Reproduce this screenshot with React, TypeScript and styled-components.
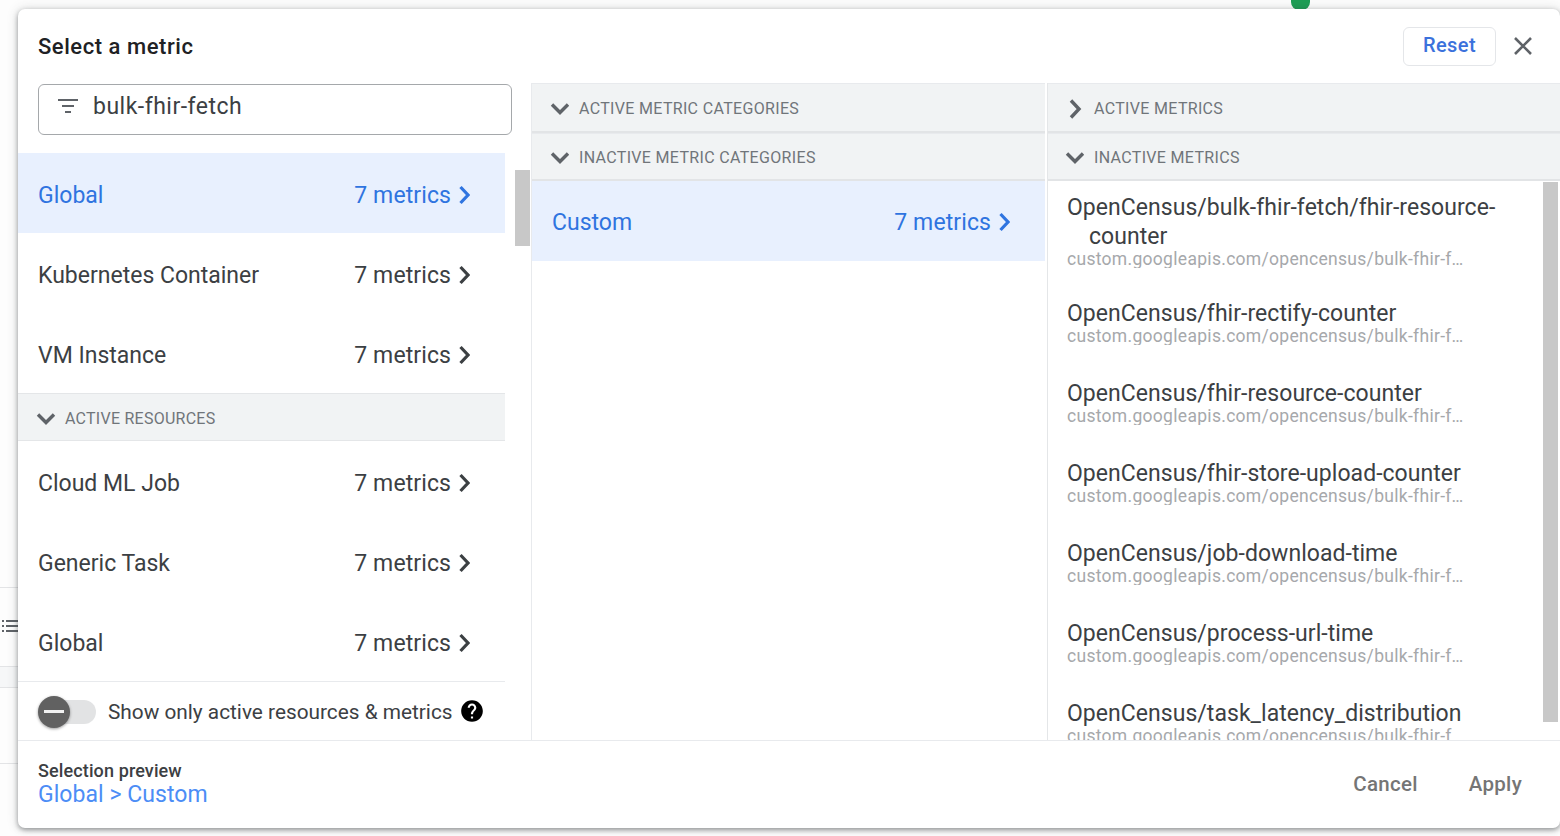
import React from "react";
import styled, { createGlobalStyle } from "styled-components";

const Global = createGlobalStyle`
  html, body { margin: 0; padding: 0; background: #fff; }
  body { font-family: Roboto, "Liberation Sans", sans-serif; color: #3c4043; -webkit-font-smoothing: antialiased; }
`;

const Page = styled.div`
  position: relative;
  width: 1560px;
  height: 836px;
  overflow: hidden;
  background: #fdfdfd;
`;
const TopDot = styled.div`
  position: absolute;
  left: 1291px;
  top: -10px;
  width: 19px;
  height: 20px;
  border-radius: 8px;
  background: #1e9e55;
`;
const BackdropList = styled.div`
  position: absolute;
  left: 2px;
  top: 619px;
  color: #5f6368;
  line-height: 0;
`;
const BackdropLine = styled.div<{ $top: number }>`
  position: absolute;
  left: 0;
  top: ${(p) => p.$top}px;
  width: 18px;
  height: 1px;
  background: #e3e4e6;
`;
const BackdropBand = styled.div`
  position: absolute;
  left: 0;
  top: 667px;
  width: 18px;
  height: 20px;
  background: #f6f7f8;
`;
const Dialog = styled.div`
  position: absolute;
  left: 18px;
  top: 9px;
  width: 1542px;
  height: 819px;
  display: flex;
  flex-direction: column;
  background: #fff;
  border-radius: 7px;
  box-shadow: 0 2px 5px rgba(60, 64, 67, 0.5), 0 0 12px rgba(60, 64, 67, 0.18);
  overflow: hidden;
`;
const Header = styled.header`
  height: 74px;
  flex: none;
  display: flex;
  align-items: center;
  padding: 0 25px 0 20px;
`;
const Title = styled.h1`
  flex: 1;
  margin: 0;
  font-size: 22px;
  font-weight: 500;
  letter-spacing: 0.55px;
  color: #202124;
`;
const ResetButton = styled.button`
  width: 93px;
  height: 39px;
  border: 1px solid #e4e6e9;
  border-radius: 6px;
  background: #fff;
  color: #3b71dc;
  font: 500 20px Roboto, sans-serif;
  letter-spacing: 0.4px;
  padding: 0 0 2px;
`;
const CloseButton = styled.button`
  width: 24px;
  height: 24px;
  margin-left: 15px;
  padding: 0;
  border: 0;
  background: none;
  color: #5f6368;
  line-height: 0;
`;
const Body = styled.div`
  flex: 1;
  min-height: 0;
  display: flex;
`;
const LeftColumn = styled.section`
  position: relative;
  width: 514px;
  flex: none;
  box-sizing: border-box;
  display: flex;
  flex-direction: column;
  border-right: 1px solid #e8eaed;
`;
const SearchBox = styled.div`
  width: 474px;
  height: 51px;
  flex: none;
  box-sizing: border-box;
  margin: 1px 0 18px 20px;
  padding: 0 0 7px 19px;
  display: flex;
  align-items: center;
  gap: 15px;
  border: 1px solid #a5a8ab;
  border-radius: 6px;
  color: #5f6368;
`;
const SearchText = styled.span`
  font-size: 23px;
  letter-spacing: 0.5px;
  color: #3c4043;
`;
const ResourceList = styled.div`
  width: 487px;
  flex: 1;
  min-height: 0;
`;
const Row = styled.div<{ $selected?: boolean; $pad: number; $top: number }>`
  height: 80px;
  flex: none;
  box-sizing: border-box;
  display: flex;
  align-items: center;
  justify-content: space-between;
  padding: ${(p) => p.$top}px ${(p) => p.$pad}px 0 20px;
  font-size: 23px;
  letter-spacing: 0;
  background: ${(p) => (p.$selected ? "#e8f0fe" : "transparent")};
  color: ${(p) => (p.$selected ? "#2f74e0" : "#3c4043")};
`;
const Count = styled.span`
  display: flex;
  align-items: center;
  gap: 7px;
  letter-spacing: 0.1px;
  color: inherit;
`;
const Chevron = styled.svg`
  width: 12px;
  height: 20px;
  fill: none;
  stroke: currentColor;
  stroke-width: 3.2;
`;
const ResourceHeader = styled.div`
  height: 48px;
  box-sizing: border-box;
  display: flex;
  align-items: center;
  gap: 9px;
  padding: 3px 0 0 18px;
  background: #f1f3f4;
  border-top: 1px solid #e4e6e8;
  border-bottom: 1px solid #e4e6e8;
  font-size: 16px;
  color: #70757a;
  letter-spacing: 0.25px;
`;
const ToggleRow = styled.div`
  width: 487px;
  height: 59px;
  flex: none;
  box-sizing: border-box;
  display: flex;
  align-items: center;
  padding: 1px 0 0 20px;
  border-top: 1px solid #e8eaed;
  font-size: 20.8px;
  color: #3c4043;
`;
const Toggle = styled.span`
  position: relative;
  width: 58px;
  height: 24px;
  margin-right: 12px;
  border-radius: 12px;
  background: linear-gradient(90deg, transparent 6px, #e2e3e4 6px);
`;
const Knob = styled.span`
  position: absolute;
  left: 0;
  top: -4px;
  width: 32px;
  height: 32px;
  border-radius: 50%;
  background: #616161;
  box-shadow: 0 1px 3px rgba(0, 0, 0, 0.4);
  display: flex;
  align-items: center;
  justify-content: center;
  &::after {
    content: "";
    width: 20px;
    height: 3px;
    background: #f1f1f1;
  }
`;
const HelpIcon = styled.svg`
  width: 26px;
  height: 26px;
  margin: -2px 0 0 6px;
  fill: #000;
`;
const ScrollThumb = styled.div<{ $left: number; $top: number; $w: number; $h: number }>`
  position: absolute;
  left: ${(p) => p.$left}px;
  top: ${(p) => p.$top}px;
  width: ${(p) => p.$w}px;
  height: ${(p) => p.$h}px;
  background: #c8c8c8;
`;
const MiddleColumn = styled.section`
  width: 513px;
  flex: none;
  display: flex;
  flex-direction: column;
`;
const RightColumn = styled.section`
  position: relative;
  flex: 1;
  min-width: 0;
  margin-left: 2px;
  border-left: 1px solid #e4e6e8;
  display: flex;
  flex-direction: column;
`;
const SectionHeader = styled.div<{ $h: number; $indent: number }>`
  height: ${(p) => p.$h}px;
  flex: none;
  box-sizing: border-box;
  display: flex;
  align-items: center;
  gap: 9px;
  padding: 2px 0 0 ${(p) => p.$indent}px;
  background: #f1f3f4;
  border-top: 1px solid #e8eaed;
  border-bottom: 2px solid #e2e4e6;
  font-size: 16px;
  color: #70757a;
  letter-spacing: 0.33px;
`;
const HeaderIcon = styled.svg`
  width: 20px;
  height: 20px;
  flex: none;
  fill: none;
  stroke: #5f6368;
  stroke-width: 3.4;
`;
const MetricList = styled.div`
  flex: 1;
  min-height: 0;
  overflow: hidden;
`;
const Metric = styled.div<{ $tall?: boolean }>`
  height: ${(p) => (p.$tall ? 106 : 80)}px;
  box-sizing: border-box;
  padding: 12px 50px 0 19px;
`;
const MetricName = styled.div`
  padding-left: 22px;
  text-indent: -22px;
  font-size: 23px;
  line-height: 29px;
  letter-spacing: 0.04px;
  color: #3c4043;
`;
const MetricPath = styled.div`
  width: 399px;
  font-size: 17.5px;
  line-height: 17px;
  letter-spacing: 0.3px;
  color: #a6a8ab;
  white-space: nowrap;
  overflow: hidden;
  text-overflow: ellipsis;
`;
const Footer = styled.footer`
  height: 88px;
  flex: none;
  box-sizing: border-box;
  display: flex;
  align-items: center;
  padding: 0 38px 2px 20px;
  border-top: 1px solid #e8eaed;
`;
const Preview = styled.div`
  flex: 1;
`;
const PreviewLabel = styled.div`
  font-size: 18px;
  font-weight: 500;
  line-height: 22px;
  letter-spacing: 0.12px;
  color: #3c4043;
`;
const PreviewValue = styled.div`
  font-size: 23px;
  line-height: 25px;
  letter-spacing: 0.05px;
  color: #4c8df6;
`;
const TextButton = styled.button`
  margin-left: 51px;
  padding: 0;
  border: 0;
  background: none;
  font: 500 20.5px Roboto, sans-serif;
  letter-spacing: 0.3px;
  color: #757575;
`;

const RightChev = () => (
  <Chevron viewBox="0 0 12 20">
    <path d="M2.5 2 L10 10 L2.5 18" />
  </Chevron>
);
const Down = () => (
  <HeaderIcon viewBox="0 0 20 20">
    <path d="M2 5.5 L10 13.5 L18 5.5" />
  </HeaderIcon>
);
const Right = () => (
  <HeaderIcon viewBox="0 0 20 20">
    <path d="M6 1.5 L14 10 L6 18.5" />
  </HeaderIcon>
);

const first = ["Global", "Kubernetes Container", "VM Instance"];
const second = ["Cloud ML Job", "Generic Task", "Global"];
const metrics = [
  "OpenCensus/fhir-rectify-counter",
  "OpenCensus/fhir-resource-counter",
  "OpenCensus/fhir-store-upload-counter",
  "OpenCensus/job-download-time",
  "OpenCensus/process-url-time",
  "OpenCensus/task_latency_distribution",
];
const PATH = "custom.googleapis.com/opencensus/bulk-fhir-fetch/fhir-resource-counter";

export default function App() {
  return (
    <Page>
      <Global />
      <TopDot />
      <BackdropList>
        <svg width="16" height="14" viewBox="0 0 16 14" fill="currentColor">
          <rect x="0" y="1" width="2" height="2" />
          <rect x="0" y="6" width="2" height="2" />
          <rect x="0" y="11" width="2" height="2" />
          <rect x="4" y="1" width="12" height="2" />
          <rect x="4" y="6" width="12" height="2" />
          <rect x="4" y="11" width="12" height="2" />
        </svg>
      </BackdropList>
      <BackdropLine $top={587} />
      <BackdropBand />
      <BackdropLine $top={666} />
      <BackdropLine $top={687} />
      <BackdropLine $top={763} />
      <Dialog>
        <Header>
          <Title>Select a metric</Title>
          <ResetButton>Reset</ResetButton>
          <CloseButton aria-label="Close">
            <svg width="24" height="24" viewBox="0 0 24 24" fill="none" stroke="currentColor" strokeWidth="2.6">
              <path d="M4 4 L20 20 M20 4 L4 20" />
            </svg>
          </CloseButton>
        </Header>
        <Body>
          <LeftColumn>
            <SearchBox>
              <svg width="20" height="15" viewBox="0 0 20 15" fill="currentColor">
                <rect x="0" y="0" width="20" height="2" />
                <rect x="4" y="6" width="12" height="2" />
                <rect x="7" y="12" width="6" height="2" />
              </svg>
              <SearchText>bulk-fhir-fetch</SearchText>
            </SearchBox>
            <ResourceList>
              {first.map((name, i) => (
                <Row key={name} $selected={i === 0} $pad={35} $top={4}>
                  {name}
                  <Count>
                    7 metrics <RightChev />
                  </Count>
                </Row>
              ))}
              <ResourceHeader>
                <Down />
                ACTIVE RESOURCES
              </ResourceHeader>
              {second.map((name) => (
                <Row key={name} $pad={35} $top={4}>
                  {name}
                  <Count>
                    7 metrics <RightChev />
                  </Count>
                </Row>
              ))}
            </ResourceList>
            <ToggleRow>
              <Toggle>
                <Knob />
              </Toggle>
              Show only active resources &amp; metrics
              <HelpIcon viewBox="0 0 24 24">
                <path d="M12 2C6.48 2 2 6.48 2 12s4.48 10 10 10 10-4.48 10-10S17.52 2 12 2zm1 17h-2v-2h2v2zm2.07-7.75l-.9.92C13.45 12.9 13 13.5 13 15h-2v-.5c0-1.1.45-2.1 1.17-2.83l1.24-1.26c.37-.36.59-.86.59-1.41 0-1.1-.9-2-2-2s-2 .9-2 2H8c0-2.21 1.79-4 4-4s4 1.79 4 4c0 .88-.36 1.68-.93 2.25z" />
              </HelpIcon>
            </ToggleRow>
            <ScrollThumb $left={497} $top={87} $w={15} $h={76} />
          </LeftColumn>
          <MiddleColumn>
            <SectionHeader $h={50} $indent={18}>
              <Down />
              ACTIVE METRIC CATEGORIES
            </SectionHeader>
            <SectionHeader $h={48} $indent={18}>
              <Down />
              INACTIVE METRIC CATEGORIES
            </SectionHeader>
            <Row $selected $pad={35} $top={2}>
              Custom
              <Count>
                7 metrics <RightChev />
              </Count>
            </Row>
          </MiddleColumn>
          <RightColumn>
            <SectionHeader $h={50} $indent={17}>
              <Right />
              ACTIVE METRICS
            </SectionHeader>
            <SectionHeader $h={48} $indent={17}>
              <Down />
              INACTIVE METRICS
            </SectionHeader>
            <MetricList>
              <Metric $tall>
                <MetricName>OpenCensus/bulk-fhir-fetch/fhir-resource-counter</MetricName>
                <MetricPath>{PATH}</MetricPath>
              </Metric>
              {metrics.map((m) => (
                <Metric key={m}>
                  <MetricName>{m}</MetricName>
                  <MetricPath>{PATH}</MetricPath>
                </Metric>
              ))}
            </MetricList>
            <ScrollThumb $left={495} $top={99} $w={15} $h={540} />
          </RightColumn>
        </Body>
        <Footer>
          <Preview>
            <PreviewLabel>Selection preview</PreviewLabel>
            <PreviewValue>Global &gt; Custom</PreviewValue>
          </Preview>
          <TextButton>Cancel</TextButton>
          <TextButton>Apply</TextButton>
        </Footer>
      </Dialog>
    </Page>
  );
}
